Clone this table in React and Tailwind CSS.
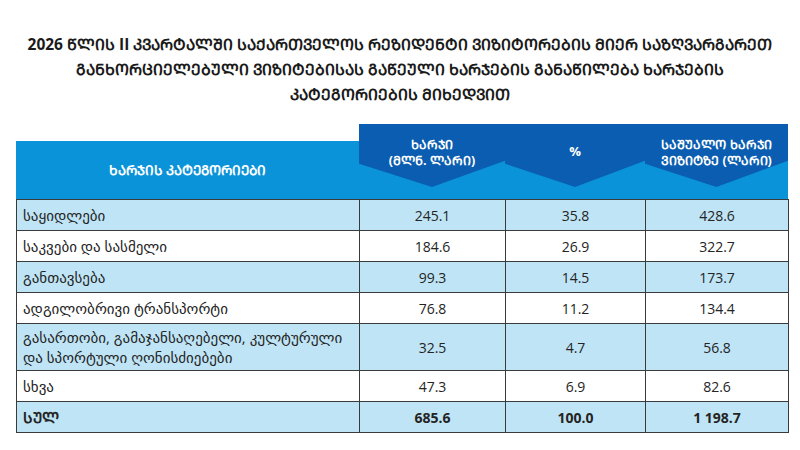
const mtav = (s) =>
  Array.from(s)
    .map((ch) => {
      const c = ch.charCodeAt(0);
      return c >= 0x10d0 && c <= 0x10ff ? String.fromCharCode(c + 0xbc0) : ch;
    })
    .join("");

const rows = [
  { name: ["საყიდლები"], spend: "245.1", pct: "35.8", avg: "428.6", tint: true },
  { name: ["საკვები და სასმელი"], spend: "184.6", pct: "26.9", avg: "322.7" },
  { name: ["განთავსება"], spend: "99.3", pct: "14.5", avg: "173.7", tint: true },
  { name: ["ადგილობრივი ტრანსპორტი"], spend: "76.8", pct: "11.2", avg: "134.4" },
  {
    name: ["გასართობი, გამაჯანსაღებელი, კულტურული", "და სპორტული ღონისძიებები"],
    spend: "32.5",
    pct: "4.7",
    avg: "56.8",
    tint: true,
  },
  { name: ["სხვა"], spend: "47.3", pct: "6.9", avg: "82.6" },
];

function TabCell({ children, top }) {
  return (
    <div className="relative h-full">
      <div className="absolute inset-x-0 top-[17px] bottom-0 bg-[#0b93d9]" />
      <div className="absolute inset-0 bg-[#0a5db0] [clip-path:polygon(0_0,100%_0,100%_49%,50%_84%,0_53%)]" />
      <div
        className={`relative flex flex-col items-center text-[12.5px] leading-[16px] text-white font-bold ${top}`}
      >
        {children}
      </div>
    </div>
  );
}

export default function App() {
  const cell = "border-[1.5px] border-[#3a3a3a]";
  return (
    <div className="w-[800px] h-[450px] bg-white overflow-hidden font-['Open_Sans','DejaVu_Sans',sans-serif] text-[#242424]">
      <h1 className="pt-[32px] text-center font-bold text-[15.5px] leading-[25px] text-[#1a1a1a] whitespace-nowrap">
        {mtav("2026 წლის II კვარტალში საქართველოს რეზიდენტი ვიზიტორების მიერ საზღვარგარეთ")}
        <br />
        {mtav("განხორციელებული ვიზიტებისას გაწეული ხარჯების განაწილება ხარჯების")}
        <br />
        {mtav("კატეგორიების მიხედვით")}
      </h1>

      <div className="ml-[16px] mt-[17px] w-[772px]">
        <div className="grid grid-cols-[343px_146px_140px_143px] h-[75px]">
          <div className="mt-[17px] bg-[#0b93d9] flex items-center justify-center text-white text-[13.5px] font-bold">
            {mtav("ხარჯის კატეგორიები")}
          </div>
          <TabCell top="pt-[13px]">
            <span>{mtav("ხარჯი")}</span>
            <span>{mtav("(მლნ. ლარი)")}</span>
          </TabCell>
          <TabCell top="pt-[19px]">
            <span className="text-[13px]">%</span>
          </TabCell>
          <TabCell top="pt-[13px]">
            <span>{mtav("საშუალო ხარჯი")}</span>
            <span>{mtav("ვიზიტზე (ლარი)")}</span>
          </TabCell>
        </div>

        <table className="w-[772px] border-collapse table-fixed text-[14px]">
          <colgroup>
            <col className="w-[343px]" />
            <col className="w-[146px]" />
            <col className="w-[140px]" />
            <col className="w-[143px]" />
          </colgroup>
          <tbody>
            {rows.map((r) => (
              <tr key={r.name[0]} className={r.tint ? "bg-[#bfe4f6]" : "bg-white"}>
                <td className={`${cell} px-[6px] py-[3px] text-[15px] leading-[20px] h-[31px]`}>
                  {r.name.map((l, i) => (
                    <div key={i}>{l}</div>
                  ))}
                </td>
                <td className={`${cell} text-center`}>{r.spend}</td>
                <td className={`${cell} text-center`}>{r.pct}</td>
                <td className={`${cell} text-center`}>{r.avg}</td>
              </tr>
            ))}
            <tr className="bg-[#bfe4f6] font-bold">
              <td className={`${cell} px-[6px] h-[31px] text-[15px]`}>{mtav("სულ")}</td>
              <td className={`${cell} text-center`}>685.6</td>
              <td className={`${cell} text-center`}>100.0</td>
              <td className={`${cell} text-center`}>1 198.7</td>
            </tr>
          </tbody>
        </table>
      </div>
    </div>
  );
}
